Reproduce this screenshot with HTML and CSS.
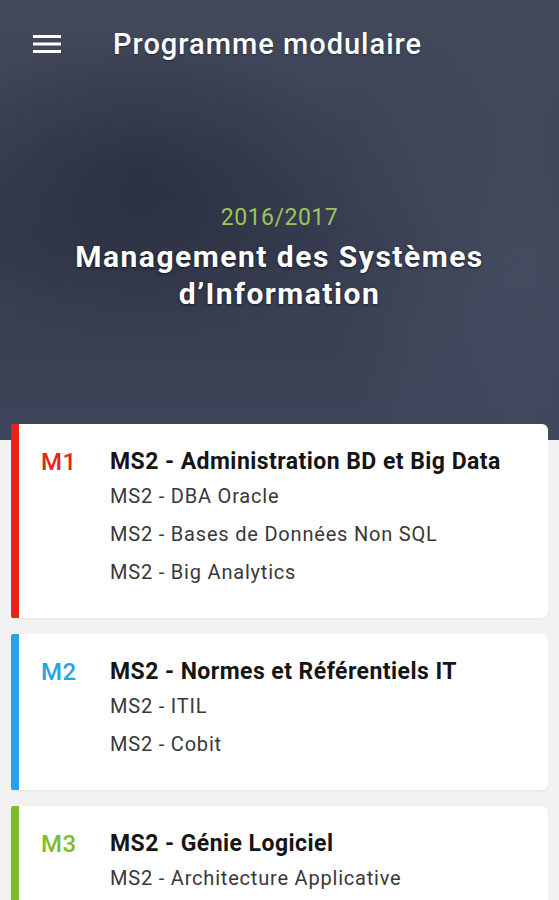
FILE: index.html
```html
<!DOCTYPE html>
<html lang="fr">
<head>
  <meta charset="UTF-8">
  <meta name="viewport" content="width=device-width, initial-scale=1.0">
  <title>Programme modulaire</title>
  <link rel="stylesheet" href="styles.css">
</head>
<body>
  <div class="hero">
    <div class="toolbar">
      <svg class="menu-icon" width="28" height="20" viewBox="0 0 28 20">
        <rect x="0" y="1" width="28" height="3" fill="#fff"/>
        <rect x="0" y="8.5" width="28" height="3" fill="#fff"/>
        <rect x="0" y="16" width="28" height="3" fill="#fff"/>
      </svg>
      <span class="toolbar-title">Programme modulaire</span>
    </div>
    <div class="hero-text">
      <div class="year">2016/2017</div>
      <h1>Management des Systèmes<br>d’Information</h1>
    </div>
  </div>

  <div class="modules">
    <div class="card red">
      <div class="code">M1</div>
      <div class="content">
        <div class="title">MS2 - Administration BD et Big Data</div>
        <div class="item">MS2 - DBA Oracle</div>
        <div class="item">MS2 - Bases de Données Non SQL</div>
        <div class="item">MS2 - Big Analytics</div>
      </div>
    </div>
    <div class="card blue">
      <div class="code">M2</div>
      <div class="content">
        <div class="title">MS2 - Normes et Référentiels IT</div>
        <div class="item">MS2 - ITIL</div>
        <div class="item">MS2 - Cobit</div>
      </div>
    </div>
    <div class="card green">
      <div class="code">M3</div>
      <div class="content">
        <div class="title">MS2 - Génie Logiciel</div>
        <div class="item">MS2 - Architecture Applicative</div>
      </div>
    </div>
  </div>
</body>
</html>
```

FILE: styles.css
```css
body {
  margin: 0;
  font-family: Roboto, "Noto Sans", sans-serif;
  background-color: #f2f2f2;
  overflow: hidden;
}
.hero {
  height: 440px;
  background:
    radial-gradient(ellipse 220px 160px at 140px 190px, rgba(30, 34, 48, 0.5), transparent),
    radial-gradient(ellipse 200px 260px at 520px 260px, rgba(82, 88, 110, 0.5), transparent),
    linear-gradient(180deg, #434a5c 0%, #373d50 55%, #3e4459 100%);
}
.toolbar {
  display: flex;
  align-items: center;
  height: 88px;
  padding-left: 33px;
}
.menu-icon {
  display: block;
}
.toolbar-title {
  margin-left: 52px;
  color: #fff;
  font-size: 29px;
  font-weight: 500;
  letter-spacing: 1px;
  text-shadow: 0 1px 2px rgba(0, 0, 0, 0.4);
}
.hero-text {
  text-align: center;
  padding-top: 116px;
}
.year {
  color: #9bc55a;
  font-size: 23px;
  letter-spacing: 0.5px;
  line-height: 28px;
}
h1 {
  margin: 6px 0 0;
  color: #fff;
  font-size: 30px;
  font-weight: 700;
  letter-spacing: 1.5px;
  line-height: 37px;
  text-shadow: 0 1px 3px rgba(0, 0, 0, 0.6);
}
.modules {
  display: flex;
  flex-direction: column;
  gap: 16px;
  margin: -16px 11px 0;
}
.card {
  display: flex;
  background-color: #fff;
  border-left: 8px solid;
  border-radius: 2px 6px 6px 2px;
  box-shadow: 0 1px 2px rgba(0, 0, 0, 0.06);
  padding: 23px 0 27px;
}
.card.red { border-color: #e8211c; }
.card.blue { border-color: #27a2e8; }
.card.green { border-color: #7dbd2b; }
.code {
  width: 91px;
  padding-left: 22px;
  box-sizing: border-box;
  font-size: 24px;
  font-weight: 500;
  letter-spacing: 0.5px;
  line-height: 30px;
}
.red .code { color: #e8211c; }
.blue .code { color: #27a2e8; }
.green .code { color: #7dbd2b; }
.title {
  font-size: 23px;
  font-weight: 700;
  letter-spacing: 0.45px;
  color: #151515;
  line-height: 30px;
}
.item {
  font-size: 20px;
  letter-spacing: 0.8px;
  color: #383838;
  line-height: 38px;
}
```
